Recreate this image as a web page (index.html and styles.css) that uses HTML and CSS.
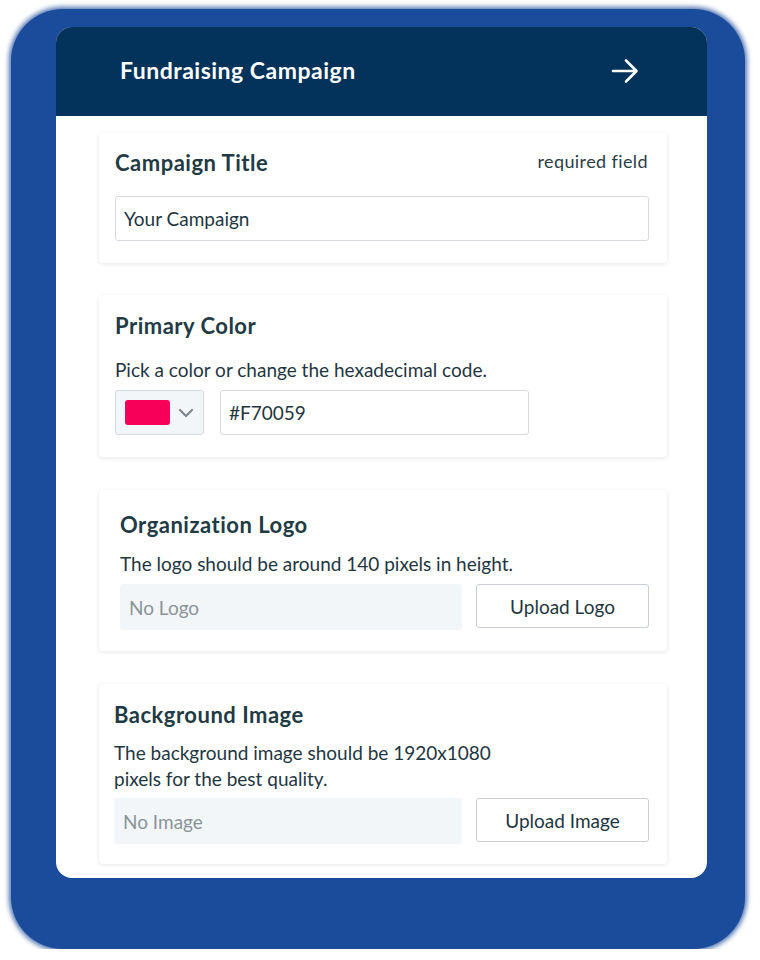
FILE: index.html
```html
<!DOCTYPE html>
<html lang="en">
<head>
<meta charset="utf-8">
<title>Fundraising Campaign</title>
<link rel="stylesheet" href="styles.css">
</head>
<body>
<div class="backdrop">
  <div class="panel">
    <header class="panel-header">
      <h1 class="panel-title">Fundraising Campaign</h1>
      <svg class="arrow" width="28" height="28" viewBox="0 0 28 28" aria-hidden="true">
        <path d="M2 14 H25 M15 3.5 L25.5 14 L15 24.5" fill="none" stroke="#ffffff" stroke-width="2.6" stroke-linecap="round" stroke-linejoin="round"/>
      </svg>
    </header>
    <main class="panel-body">
      <section class="card card-title">
        <div class="card-head">
          <h2 class="card-heading">Campaign Title</h2>
          <span class="required">required field</span>
        </div>
        <div class="input input-full">Your Campaign</div>
      </section>

      <section class="card card-color">
        <h2 class="card-heading">Primary Color</h2>
        <p class="card-desc">Pick a color or change the hexadecimal code.</p>
        <div class="row">
          <div class="picker">
            <span class="swatch"></span>
            <svg class="chevron" width="16" height="10" viewBox="0 0 16 10" aria-hidden="true">
              <path d="M2 2 L8 8 L14 2" fill="none" stroke="#7d878e" stroke-width="2.2" stroke-linecap="round" stroke-linejoin="round"/>
            </svg>
          </div>
          <div class="input input-hex">#F70059</div>
        </div>
      </section>

      <section class="card card-logo">
        <h2 class="card-heading">Organization Logo</h2>
        <p class="card-desc">The logo should be around 140 pixels in height.</p>
        <div class="row upload-row">
          <div class="placeholder placeholder-logo">No Logo</div>
          <button class="btn">Upload Logo</button>
        </div>
      </section>

      <section class="card card-bg">
        <h2 class="card-heading">Background Image</h2>
        <p class="card-desc card-desc-narrow">The background image should be 1920x1080 pixels for the best quality.</p>
        <div class="row upload-row">
          <div class="placeholder placeholder-image">No Image</div>
          <button class="btn">Upload Image</button>
        </div>
      </section>
    </main>
  </div>
</div>
</body>
</html>
```

FILE: styles.css
```css
* { box-sizing: border-box; }

html, body {
  margin: 0;
  background: #ffffff;
}

body {
  font-family: "Lato", "Liberation Sans", sans-serif;
  color: #1f3641;
}

.backdrop {
  margin: 9px 15px 0 11px;
  padding: 18px 38px 68px 45px;
  border-radius: 52px;
  background: #1b4c9b;
  box-shadow: 0 0 5px 2px rgba(27, 76, 155, 0.8);
  height: 940px;
}

.panel {
  background: #ffffff;
  border-radius: 16px;
  overflow: hidden;
  height: 851px;
}

.panel-header {
  height: 89px;
  background: #03325a;
  display: flex;
  align-items: center;
  justify-content: space-between;
  padding: 0 68px 4px 64px;
}

.panel-title {
  margin: 0;
  color: #ffffff;
  font-size: 23px;
  font-weight: 700;
  letter-spacing: 0.5px;
}

.arrow { display: block; margin-top: 2px; }

.panel-body {
  padding: 17px 40px 0 43px;
  display: flex;
  flex-direction: column;
  gap: 32px;
}

.card {
  background: #ffffff;
  border-radius: 4px;
  box-shadow: 0 1px 4px rgba(20, 40, 60, 0.12);
}

.card-title { padding: 17px 18px 22px 16px; height: 130px; }
.card-color { padding: 18px 18px 22px 16px; height: 162px; }
.card-logo  { padding: 22px 18px 21px 21px; height: 161px; margin-top: 1px; }
.card-bg    { padding: 18px 18px 21px 15px; height: 180px; margin-top: 1px; }

.card-head {
  display: flex;
  justify-content: space-between;
  align-items: flex-start;
  margin-bottom: 20px;
}

.card-heading {
  margin: 0;
  font-size: 22px;
  line-height: 26px;
  font-weight: 700;
  letter-spacing: 0.5px;
  color: #223a44;
}

.required {
  font-size: 18px;
  line-height: 22px;
  letter-spacing: 0.4px;
  margin-right: 1px;
  color: #2b3d47;
}

.card-desc {
  margin: 18px 0 7px;
  font-size: 19px;
  line-height: 26px;
  color: #1f3641;
}

.card-logo .card-desc { margin: 13px 0 7px; }
.card-bg .card-desc { margin: 12px 0 6px; }
.card-desc-narrow { max-width: 380px; }

.input {
  height: 45px;
  border: 1px solid #d5dadf;
  border-radius: 3px;
  padding: 0 8px;
  display: flex;
  align-items: center;
  font-size: 19px;
  color: #1f3641;
  background: #ffffff;
}

.row {
  display: flex;
  align-items: flex-start;
  gap: 16px;
}

.picker {
  width: 89px;
  height: 45px;
  border: 1px solid #d5dadf;
  border-radius: 3px;
  background: #f3f6f9;
  display: flex;
  align-items: center;
  padding-left: 9px;
  gap: 8px;
}

.swatch {
  width: 45px;
  height: 25px;
  border-radius: 3px;
  background: #f70059;
}

.chevron { display: block; }

.input-hex { width: 309px; }

.upload-row { gap: 14px; }

.placeholder {
  flex: 1;
  height: 46px;
  border-radius: 3px;
  background: #f3f6f8;
  display: flex;
  align-items: center;
  padding-left: 9px;
  font-size: 19px;
  color: #8b949a;
}

.btn {
  width: 173px;
  height: 44px;
  border: 1px solid #c9cfd4;
  border-radius: 3px;
  background: #ffffff;
  font-family: inherit;
  font-size: 19px;
  color: #1f3641;
  padding: 0;
}
```
